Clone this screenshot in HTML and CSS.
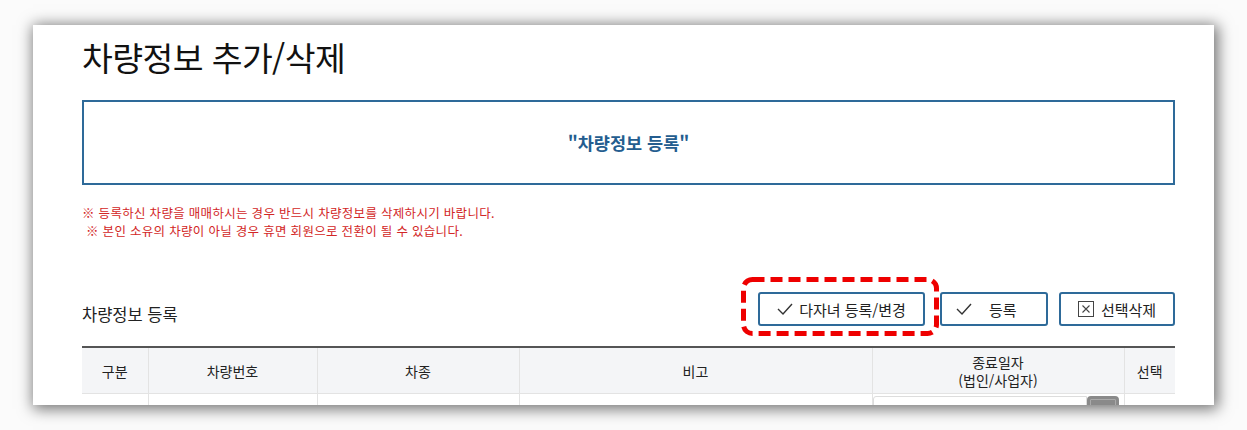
FILE: index.html
```html
<!DOCTYPE html>
<html lang="ko">
<head>
<meta charset="utf-8">
<title>차량정보 추가/삭제</title>
<link rel="stylesheet" href="styles.css">
</head>
<body>
<div class="stage">
  <div class="panel">
    <h1 class="title">차량정보 추가/삭제</h1>
    <div class="banner">"차량정보 등록"</div>
    <div class="notes">
      <p class="note">※ 등록하신 차량을 매매하시는 경우 반드시 차량정보를 삭제하시기 바랍니다.</p>
      <p class="note note-indent">※ 본인 소유의 차량이 아닐 경우 휴면 회원으로 전환이 될 수 있습니다.</p>
    </div>
    <div class="toolbar">
      <h2 class="section-title">차량정보 등록</h2>
      <div class="actions">
        <div class="marked">
          <button class="btn btn-wide" type="button">
            <svg class="ico-check" viewBox="0 0 16 12" width="16" height="12"><polyline points="1,6 6,11 15,1" fill="none" stroke="#333" stroke-width="1.4"/></svg>
            <span>다자녀 등록/변경</span>
          </button>
          <svg class="annot" viewBox="0 0 198 59" width="198" height="59"><rect x="2.5" y="2.5" width="193" height="54" rx="9" ry="9" fill="none" stroke="#ee0000" stroke-width="5" stroke-dasharray="12 6"/></svg>
        </div>
        <button class="btn btn-reg" type="button">
          <svg class="ico-check" viewBox="0 0 16 12" width="16" height="12"><polyline points="1,6 6,11 15,1" fill="none" stroke="#333" stroke-width="1.4"/></svg>
          <span class="reg-label">등록</span>
        </button>
        <button class="btn btn-del" type="button">
          <svg class="ico-x" viewBox="0 0 16 16" width="16" height="16"><rect x="0.5" y="0.5" width="15" height="15" fill="none" stroke="#444" stroke-width="1"/><path d="M4.5 4.5 L11.5 11.5 M11.5 4.5 L4.5 11.5" stroke="#444" stroke-width="1.1"/></svg>
          <span>선택삭제</span>
        </button>
      </div>
    </div>
    <table class="grid">
      <colgroup>
        <col style="width:66px">
        <col style="width:169px">
        <col style="width:202px">
        <col style="width:353px">
        <col style="width:252px">
        <col style="width:51px">
      </colgroup>
      <thead>
        <tr>
          <th>구분</th>
          <th>차량번호</th>
          <th>차종</th>
          <th>비고</th>
          <th>종료일자<br>(법인/사업자)</th>
          <th>선택</th>
        </tr>
      </thead>
      <tbody>
        <tr>
          <td></td>
          <td></td>
          <td></td>
          <td></td>
          <td class="date-cell"><div class="date-field"><span class="date-input"></span><span class="date-btn"></span></div></td>
          <td></td>
        </tr>
      </tbody>
    </table>
  </div>
</div>
</body>
</html>
```
FILE: styles.css
```css
html, body {
  margin: 0;
  padding: 0;
  background: #fbfbfb;
}
body {
  font-family: "Noto Sans CJK KR", "Noto Sans", sans-serif;
  color: #222;
  width: 1247px;
  height: 430px;
  overflow: hidden;
}
.stage {
  padding: 25px 0 0 33px;
}
.panel {
  width: 1093px;
  height: 380px;
  padding: 0 39px 0 49px;
  background: #fff;
  box-shadow: 2px 2px 14px 2px rgba(0, 0, 0, 0.55);
  overflow: hidden;
  box-sizing: content-box;
}
.title {
  margin: 0;
  padding-top: 12px;
  height: 40px;
  line-height: 40px;
  font-size: 33.5px;
  font-weight: 400;
  color: #111;
  letter-spacing: -0.6px;
}
.banner {
  margin-top: 23px;
  height: 85px;
  box-sizing: border-box;
  border: 2px solid #2e6a99;
  display: flex;
  align-items: center;
  justify-content: center;
  font-size: 17.5px;
  font-weight: 700;
  color: #245d8f;
}
.notes {
  margin-top: 19px;
}
.note {
  margin: 0;
  font-size: 12.5px;
  line-height: 18px;
  color: #d22626;
  letter-spacing: 0.3px;
}
.note-indent {
  padding-left: 4px;
}
.toolbar {
  margin-top: 52px;
  display: flex;
  align-items: center;
  justify-content: space-between;
  height: 34px;
}
.section-title {
  margin: 0;
  padding-top: 9px;
  font-size: 16.5px;
  font-weight: 400;
  color: #222;
}
.actions {
  display: flex;
  align-items: center;
}
.marked {
  position: relative;
}
.annot {
  position: absolute;
  left: -17px;
  top: -15px;
  pointer-events: none;
}
.btn {
  height: 34px;
  box-sizing: border-box;
  border: 2px solid #2e6a99;
  border-radius: 3px;
  background: #fff;
  font-family: inherit;
  font-size: 15px;
  color: #222;
  display: flex;
  align-items: center;
  justify-content: center;
  padding: 0;
  gap: 6px;
}
.btn-wide {
  width: 167px;
}
.btn-reg {
  width: 108px;
  margin-left: 15px;
  gap: 0;
  justify-content: flex-start;
  padding-left: 14px;
}
.reg-label {
  margin-left: 17px;
}
.btn-del {
  width: 116px;
  margin-left: 11px;
  gap: 7px;
}
.ico-check {
  display: block;
}
.ico-x {
  display: block;
}
.grid {
  margin-top: 20px;
  width: 1093px;
  border-collapse: collapse;
  table-layout: fixed;
  border-top: 2px solid #555;
}
.grid th {
  background: #f4f5f7;
  height: 45px;
  padding: 0;
  font-size: 14px;
  font-weight: 400;
  line-height: 18px;
  color: #222;
  border-left: 1px solid #e3e3e3;
  border-bottom: 1px solid #e3e3e3;
}
.grid th:first-child,
.grid td:first-child {
  border-left: none;
}
.grid td {
  height: 40px;
  padding: 0;
  border-left: 1px solid #e3e3e3;
  vertical-align: top;
}
.date-cell {
  padding: 2px 0 0 2px;
}
.date-field {
  display: flex;
  padding-top: 2px;
}
.date-input {
  display: block;
  width: 214px;
  height: 30px;
  border: 1px solid #ddd;
  border-radius: 3px 0 0 3px;
  box-sizing: border-box;
}
.date-btn {
  display: block;
  width: 32px;
  height: 30px;
  background: #8a8a8a;
  border-radius: 4px;
  box-sizing: border-box;
  border: 3px solid #8a8a8a;
  box-shadow: inset 0 0 0 1px #aaa;
}
```
